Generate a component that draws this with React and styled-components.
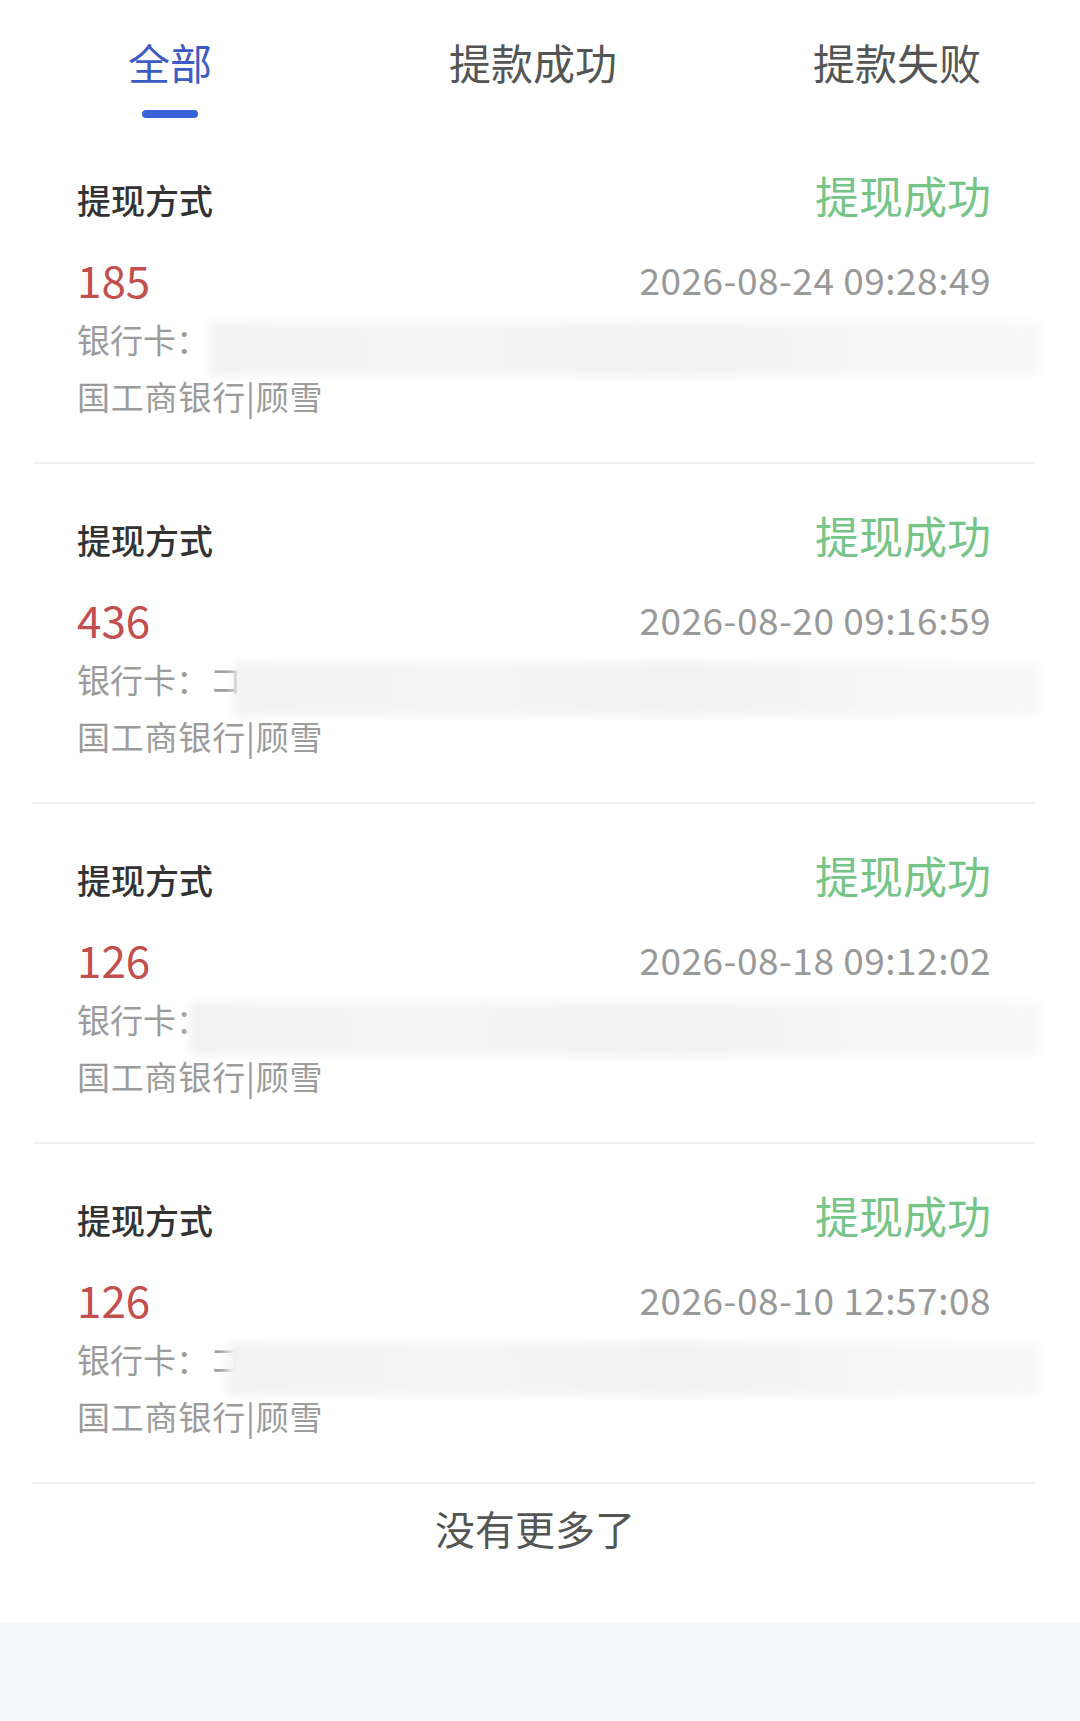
import React from "react";
import styled, { createGlobalStyle } from "styled-components";

const GlobalStyle = createGlobalStyle`
  html, body {
    margin: 0;
    padding: 0;
    background: #f5f6f8;
  }
  body {
    font-family: "Noto Sans CJK SC", "Noto Sans", sans-serif;
  }
  * { box-sizing: border-box; }
`;

const Page = styled.div`
  min-height: 1721px;
  background: #f5f6f8;
`;

const Sheet = styled.main`
  background: #ffffff;
`;

const TabBar = styled.nav`
  height: 124px;
  display: grid;
  grid-template-columns: 340px 386px 1fr;
  padding-right: 12px;
`;

const Tab = styled.div`
  display: flex;
  flex-direction: column;
  align-items: center;
  padding-top: 40px;
  font-size: 42px;
  line-height: 44px;
  color: ${(p) => (p.$active ? "#3d5bc4" : "#555555")};
`;

const Indicator = styled.span`
  margin-top: 26px;
  width: 56px;
  height: 8px;
  border-radius: 4px;
  background: #3a62d8;
`;

const List = styled.section`
  display: flex;
  flex-direction: column;
`;

const Card = styled.article`
  margin: 0 45px 0 33px;
  padding: 43px 44px 38px;
  border-bottom: 2px solid #f0f0f2;
`;

const TitleRow = styled.div`
  height: 56px;
  display: flex;
  justify-content: space-between;
  align-items: baseline;
`;

const Title = styled.span`
  font-size: 34px;
  line-height: 56px;
  font-weight: 500;
  color: #333333;
`;

const Status = styled.span`
  font-size: 44px;
  line-height: 56px;
  color: #76c487;
`;

const AmountRow = styled.div`
  height: 56px;
  margin-top: 28px;
  display: flex;
  justify-content: space-between;
  align-items: center;
`;

const Amount = styled.span`
  font-size: 44px;
  line-height: 56px;
  color: #c24e4e;
`;

const DateText = styled.span`
  font-size: 37px;
  line-height: 56px;
  color: #999999;
  letter-spacing: 0.5px;
`;

const BankRow = styled.div`
  height: 56px;
  margin-top: 4px;
  display: flex;
  align-items: flex-start;
  font-size: 33px;
  line-height: 56px;
  color: #9b9b9b;
`;

const Partial = styled.span`
  color: #a0a0a0;
`;

const Redaction = styled.div`
  flex: 1;
  height: 54px;
  margin-top: 11px;
  margin-right: -49px;
  margin-left: ${(p) => p.$offset || 0}px;
  background: linear-gradient(
    90deg,
    #f3f3f3 0%,
    #f5f5f5 30%,
    #f2f2f2 55%,
    #f6f6f6 80%,
    #f9f9f9 100%
  );
  filter: blur(5px);
`;

const NameRow = styled.div`
  height: 56px;
  margin-top: 1px;
  font-size: 33px;
  line-height: 56px;
  color: #9b9b9b;
  letter-spacing: 0.8px;
`;

const Footer = styled.div`
  padding: 19px 10px 69px 0;
  text-align: center;
  font-size: 40px;
  line-height: 50px;
  color: #555555;
`;

const tabs = ["全部", "提款成功", "提款失败"];

const records = [
  { amount: "185", time: "2026-08-24 09:28:49", partial: "", offset: 0 },
  { amount: "436", time: "2026-08-20 09:16:59", partial: "コ", offset: -8 },
  { amount: "126", time: "2026-08-18 09:12:02", partial: "", offset: -20 },
  { amount: "126", time: "2026-08-10 12:57:08", partial: "コ", offset: -15 },
];

export default function App() {
  return (
    <Page>
      <GlobalStyle />
      <Sheet>
        <TabBar>
          {tabs.map((t, i) => (
            <Tab key={t} $active={i === 0}>
              {t}
              {i === 0 && <Indicator />}
            </Tab>
          ))}
        </TabBar>
        <List>
          {records.map((r, i) => (
            <Card key={i}>
              <TitleRow>
                <Title>提现方式</Title>
                <Status>提现成功</Status>
              </TitleRow>
              <AmountRow>
                <Amount>{r.amount}</Amount>
                <DateText>{r.time}</DateText>
              </AmountRow>
              <BankRow>
                <span>银行卡：</span>
                {r.partial && <Partial>{r.partial}</Partial>}
                <Redaction $offset={r.offset} />
              </BankRow>
              <NameRow>国工商银行|顾雪</NameRow>
            </Card>
          ))}
        </List>
        <Footer>没有更多了</Footer>
      </Sheet>
    </Page>
  );
}
